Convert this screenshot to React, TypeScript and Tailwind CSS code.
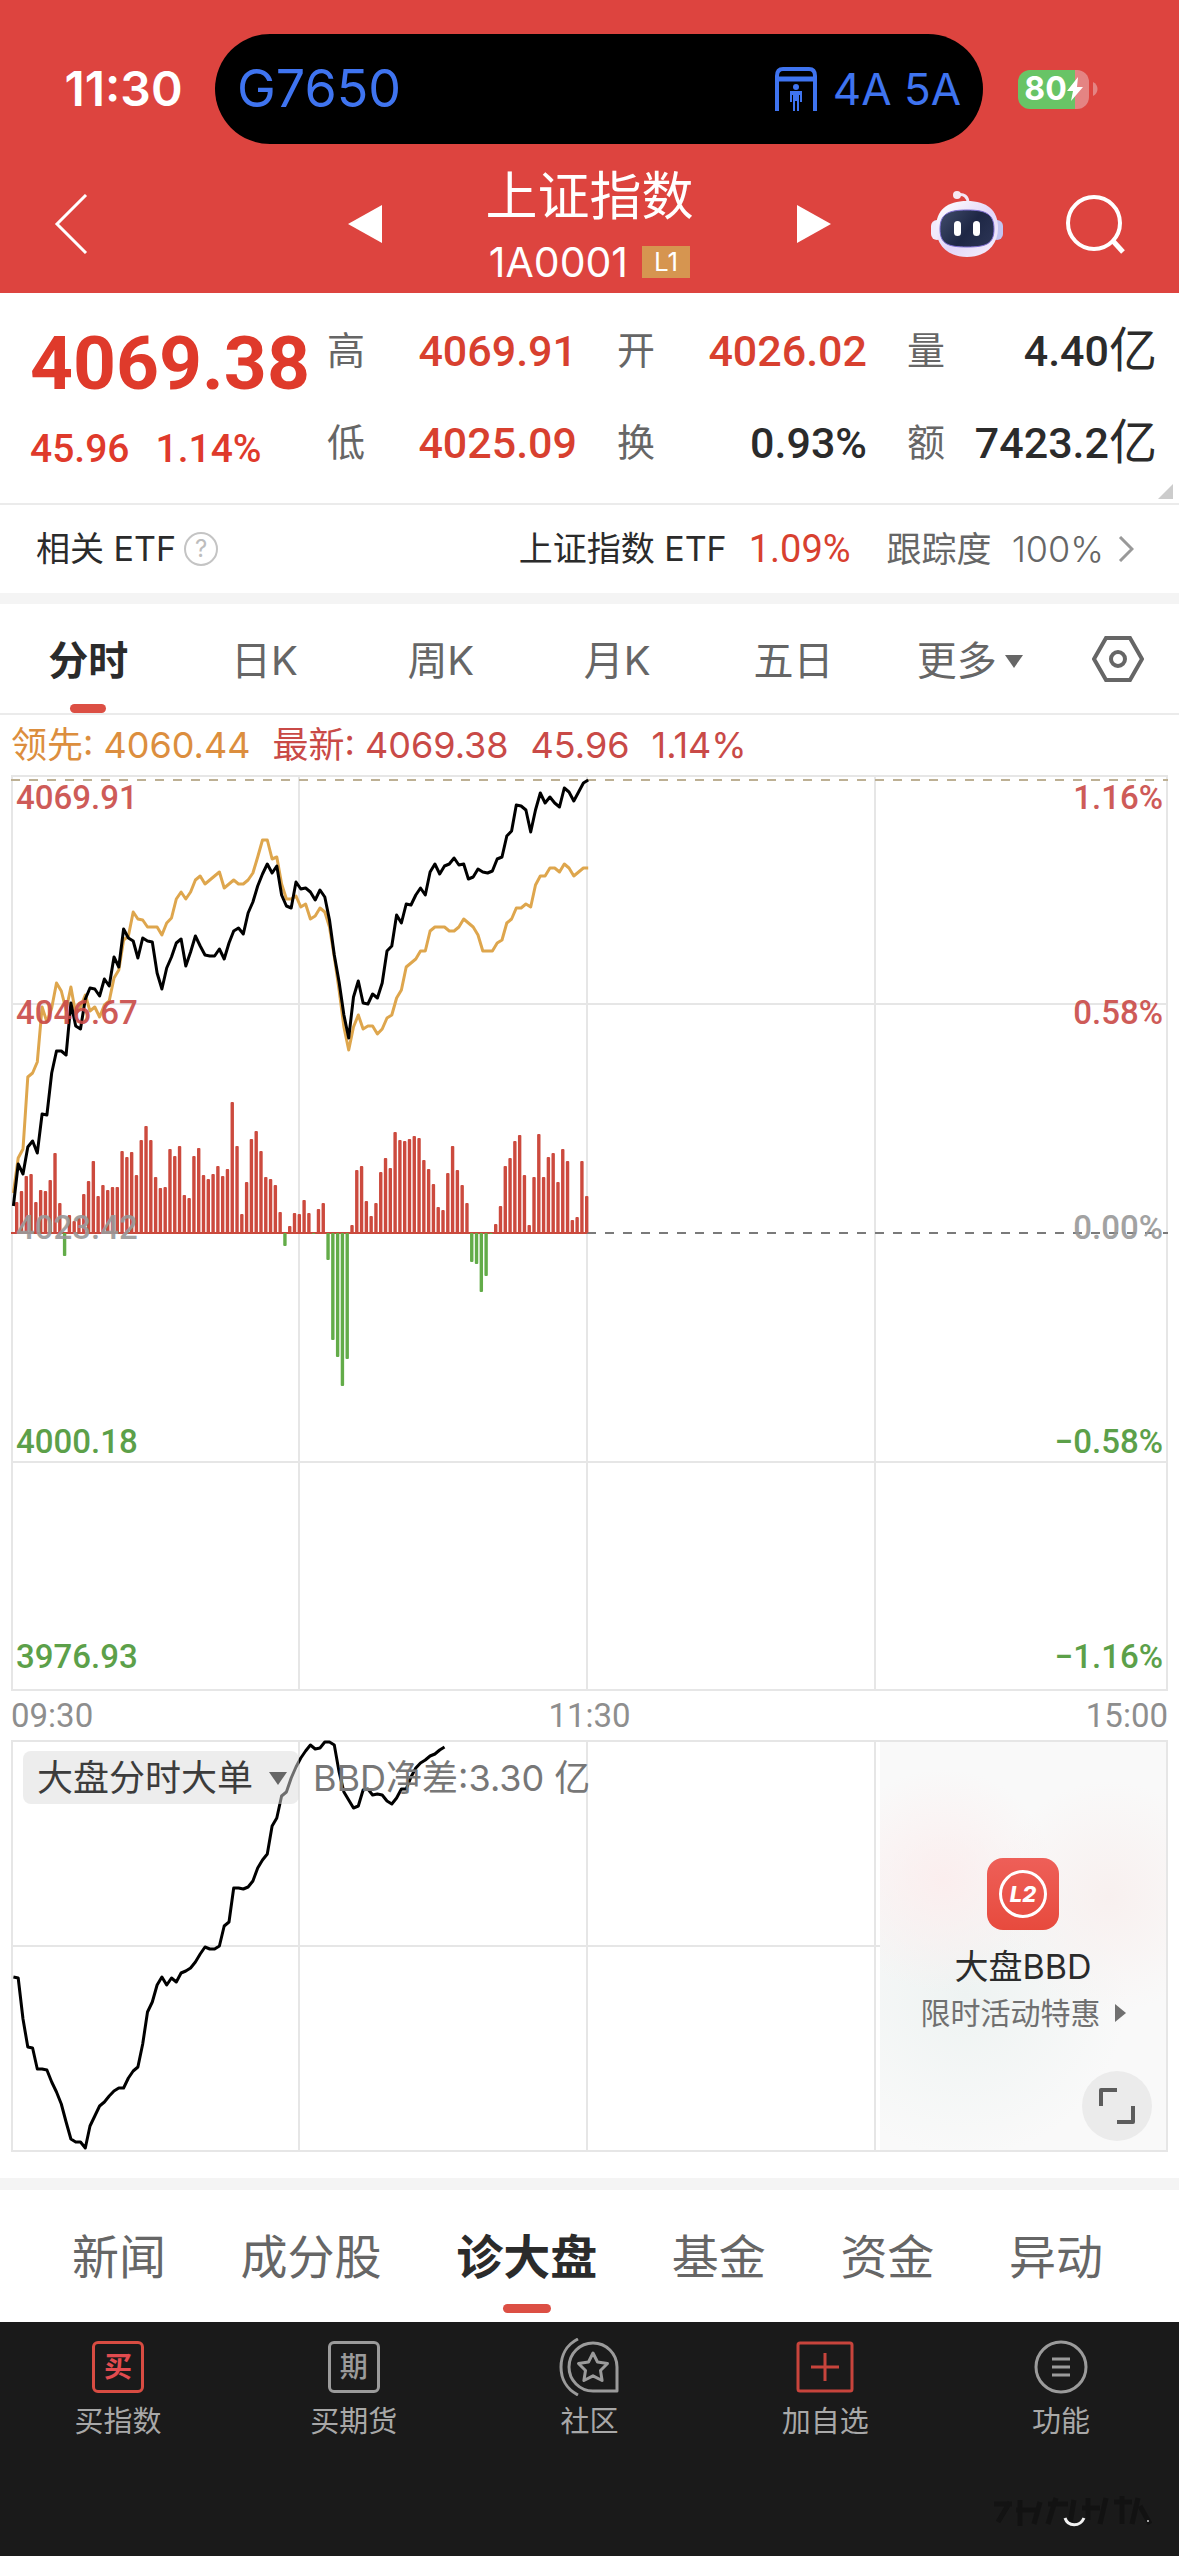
import { useState } from "react";
import { clsx } from "clsx";

const stats = [
  { label: "高", value: "4069.91", tone: "up" },
  { label: "开", value: "4026.02", tone: "up" },
  { label: "量", value: "4.40", unit: "亿" },
  { label: "低", value: "4025.09", tone: "up" },
  { label: "换", value: "0.93%" },
  { label: "额", value: "7423.2", unit: "亿" },
];

const periods = ["分时", "日K", "周K", "月K", "五日", "更多"];

const sections = ["新闻", "成分股", "诊大盘", "基金", "资金", "异动"];

const priceAxis = [
  { price: "4069.91", change: "1.16%", color: "text-[#c94a47]" },
  { price: "4046.67", change: "0.58%", color: "text-[#c94a47]" },
  { price: "4023.42", change: "0.00%", color: "text-[#999999]" },
  { price: "4000.18", change: "−0.58%", color: "text-[#4b9636]" },
  { price: "3976.93", change: "−1.16%", color: "text-[#4b9636]" },
];

// One value per minute, measured down from the top edge of the plot.
const indexLine = [
  431, 389, 399, 372, 366, 378, 339, 340, 298, 276, 276, 280, 228, 251, 254, 224,
  213, 214, 221, 204, 211, 182, 192, 154, 163, 166, 183, 163, 166, 167, 198, 214,
  193, 182, 168, 164, 191, 177, 161, 171, 180, 181, 181, 174, 184, 168, 156, 153,
  159, 138, 127, 111, 99, 89, 98, 91, 120, 131, 133, 107, 114, 113, 117, 125, 115,
  122, 145, 180, 207, 240, 263, 222, 206, 228, 229, 219, 223, 208, 176, 171, 140,
  148, 129, 130, 120, 113, 120, 97, 89, 99, 91, 89, 83, 90, 89, 104, 102, 94, 97,
  98, 96, 84, 82, 61, 56, 30, 31, 35, 57, 35, 18, 28, 22, 28, 32, 13, 17, 26, 17,
  8, 5,
];

const leadLine = [
  418, 383, 374, 302, 298, 287, 232, 247, 233, 208, 216, 235, 212, 239, 232, 220,
  236, 232, 242, 230, 226, 203, 195, 165, 161, 137, 144, 145, 152, 152, 152, 160,
  148, 143, 124, 117, 124, 117, 105, 101, 109, 105, 101, 97, 113, 109, 105, 109,
  109, 105, 98, 82, 65, 65, 84, 82, 109, 124, 124, 121, 132, 129, 144, 141, 133,
  137, 152, 182, 215, 252, 275, 252, 240, 254, 251, 251, 259, 254, 243, 240, 223,
  215, 192, 188, 184, 176, 176, 156, 152, 152, 152, 156, 156, 152, 144, 148, 152,
  160, 176, 176, 176, 168, 165, 148, 144, 133, 133, 129, 132, 110, 101, 101, 93,
  93, 97, 89, 93, 101, 97, 93, 93,
];

const momentum = [
  31, 42, 57, 59, 31, 43, 42, 53, 80, 30, -23, 18, 12, 15, 39, 52, 72, 37, 48, 43,
  46, 46, 82, 76, 81, 58, 93, 107, 93, 56, 45, 46, 84, 77, 87, 38, 35, 77, 85, 58,
  54, 59, 67, 57, 64, 131, 87, 19, 51, 94, 102, 82, 56, 54, 48, 21, -13, 7, 20,
  19, 33, 20, -1, 24, 30, -27, -107, -124, -153, -126, 8, 63, 67, 32, 17, 30, 61,
  75, 65, 101, 93, 92, 94, 97, 95, 73, 64, 49, 26, 23, 60, 87, 63, 48, 30, -29,
  -31, -59, -43, -1, 9, 27, 67, 75, 92, 98, 58, 8, 56, 99, 56, 76, 80, 51, 84, 72,
  13, 16, 72, 37,
];

const orderLine = [
  237, 238, 279, 307, 308, 329, 329, 330, 342, 352, 364, 382, 399, 402, 402, 408,
  386, 376, 366, 362, 356, 351, 348, 348, 338, 331, 327, 304, 272, 262, 245, 237,
  245, 238, 242, 233, 231, 228, 222, 214, 207, 209, 209, 206, 186, 182, 148, 148,
  149, 147, 141, 128, 120, 114, 86, 78, 56, 52, 38, 27, 18, 11, 5, 9, 8, 2, 2, 5,
  32, 52, 60, 68, 66, 50, 49, 55, 54, 55, 61, 64, 58, 49, 49, 37, 28, 23, 20, 16,
  14, 10, 7,
];

const STEP = 4.79;

function toPoints(values: number[]) {
  return values.map((y, i) => `${(2.4 + i * STEP).toFixed(1)},${y}`).join(" ");
}

function StatusBar() {
  return (
    <div className="flex items-center pt-[34px]">
      <span className="w-[215px] pl-8 text-center text-[48px] leading-none font-semibold">
        11:30
      </span>
      <div className="flex h-[110px] flex-1 items-center justify-between rounded-full bg-black pr-[22px] pl-[22px] text-[#3f74f0]">
        <span className="text-[52px] leading-none">G7650</span>
        <span className="flex items-center gap-4 text-[44px] leading-none">
          <svg width="42" height="45" viewBox="0 0 42 45" fill="none" aria-hidden>
            <path d="M2 44V9c0-5 2-7 6-7h26c4 0 6 2 6 7v35" stroke="currentColor" strokeWidth="4" />
            <path d="M2 12h38" stroke="currentColor" strokeWidth="5" />
            <circle cx="21" cy="20" r="3" fill="currentColor" />
            <path d="M15 24h12v11h-2v-7h-1v16h-2V34h-2v10h-2V28h-1v7h-2z" fill="currentColor" />
          </svg>
          4A 5A
        </span>
      </div>
      <div className="flex w-[196px] items-center gap-1 pl-[35px]">
        <div className="flex h-[39px] w-[71px] items-center justify-center rounded-xl bg-linear-to-r from-[#68c466] from-80% to-[#e48483] to-80%">
          <span className="text-[32px] leading-none font-bold">80</span>
          <svg width="16" height="24" viewBox="0 0 16 24" fill="currentColor" aria-hidden>
            <path d="M11 0L0 14h6L4 24l12-14h-6z" />
          </svg>
        </div>
        <svg width="5" height="14" viewBox="0 0 5 14" fill="#e48483" aria-hidden>
          <path d="M0 0c6 3 6 11 0 14z" />
        </svg>
      </div>
    </div>
  );
}

function RobotIcon() {
  return (
    <svg width="72" height="68" viewBox="0 0 72 68" fill="none" aria-hidden>
      <defs>
        <linearGradient id="shell" x1="10" y1="10" x2="60" y2="68" gradientUnits="userSpaceOnUse">
          <stop stopColor="#ffffff" />
          <stop offset="0.55" stopColor="#e2d6f8" />
          <stop offset="1" stopColor="#f5effc" />
        </linearGradient>
        <linearGradient id="visor" x1="14" y1="22" x2="60" y2="58" gradientUnits="userSpaceOnUse">
          <stop stopColor="#3c4766" />
          <stop offset="0.5" stopColor="#1e2745" />
          <stop offset="1" stopColor="#2c3556" />
        </linearGradient>
      </defs>
      <path d="M26 5c7-2 11 2 11 8" stroke="#f3e6f5" strokeWidth="3" />
      <circle cx="26" cy="5" r="4" fill="#f7e9f3" />
      <rect x="0" y="30" width="12" height="20" rx="6" fill="#f1ebfb" />
      <rect x="60" y="30" width="12" height="20" rx="6" fill="#c3c4f0" />
      <path d="M36 11c20 0 31 9 31 27S54 67 36 67 5 56 5 38 16 11 36 11z" fill="url(#shell)" />
      <path
        d="M36 20c19 0 27 4 27 19S55 57 36 57 9 54 9 39s8-19 27-19z"
        fill="url(#visor)"
        stroke="#7b6cd0"
        strokeWidth="1"
      />
      <rect x="23" y="31" width="7" height="15" rx="3.5" fill="#fff" />
      <rect x="42" y="31" width="7" height="15" rx="3.5" fill="#fff" />
    </svg>
  );
}

function NavBar() {
  return (
    <div className="grid grid-cols-[1fr_auto_1fr] items-center pt-[22px] pr-[54px] pb-[11px] pl-[54px]">
      <button type="button" aria-label="返回" className="justify-self-start">
        <svg width="34" height="60" viewBox="0 0 34 60" fill="none" stroke="currentColor" strokeWidth="3" aria-hidden>
          <path d="M32 1L3 30l29 29" />
        </svg>
      </button>
      <div className="flex items-center gap-[103px]">
        <button type="button" aria-label="上一个">
          <svg width="34" height="38" viewBox="0 0 34 38" fill="currentColor" aria-hidden>
            <path d="M34 0v38L0 19z" />
          </svg>
        </button>
        <div className="flex flex-col items-center gap-[14px]">
          <h1 className="text-[52px] leading-[62px]">上证指数</h1>
          <p className="flex items-center gap-[14px] text-[41px] leading-10">
            1A0001
            <span className="bg-[#d69550] px-3 text-[26px] leading-8">L1</span>
          </p>
        </div>
        <button type="button" aria-label="下一个">
          <svg width="34" height="38" viewBox="0 0 34 38" fill="currentColor" aria-hidden>
            <path d="M0 0v38l34-19z" />
          </svg>
        </button>
      </div>
      <div className="flex items-center gap-[62px] justify-self-end">
        <button type="button" aria-label="智能助手">
          <RobotIcon />
        </button>
        <button type="button" aria-label="搜索">
          <svg width="60" height="60" viewBox="0 0 60 60" fill="none" stroke="currentColor" strokeWidth="4" aria-hidden>
            <circle cx="29" cy="29" r="26" />
            <path d="M48 47l10 11" strokeWidth="5" />
          </svg>
        </button>
      </div>
    </div>
  );
}

function QuotePanel() {
  return (
    <section className="relative flex border-b-2 border-[#ebebeb] pt-7 pr-[22px] pb-6 pl-[30px] font-[Roboto,'Noto_Sans_CJK_SC',sans-serif] text-[#2b2b2b]">
      <div className="flex w-[297px] flex-col gap-[18px] pt-1 text-[#df3a2b]">
        <p className="text-[75px] leading-[76px] font-bold">4069.38</p>
        <p className="flex gap-[26px] text-[39px] leading-[60px] font-medium">
          <span>45.96</span>
          <span>1.14%</span>
        </p>
      </div>
      <dl className="grid flex-1 grid-cols-3 content-start gap-x-10 gap-y-8">
        {stats.map((item) => (
          <div key={item.label} className="flex h-[60px] items-center justify-between">
            <dt className="text-[38px] leading-none text-[#666666]">{item.label}</dt>
            <dd
              className={clsx(
                "flex items-center text-[43px] leading-none font-medium",
                item.tone === "up" && "text-[#d8402f]",
              )}
            >
              {item.value}
              {item.unit && <span className="text-[48px] font-normal">{item.unit}</span>}
            </dd>
          </div>
        ))}
      </dl>
      <svg className="absolute right-[6px] bottom-1" width="15" height="15" viewBox="0 0 15 15" aria-hidden>
        <path d="M15 0v15H0z" fill="#cccccc" />
      </svg>
    </section>
  );
}

function EtfRow() {
  return (
    <section className="flex h-[88px] items-center justify-between pr-[45px] pl-9 text-[34px] leading-none text-[#2b2b2b]">
      <div className="flex items-center gap-2">
        <span>相关 ETF</span>
        <button
          type="button"
          aria-label="说明"
          className="flex size-[34px] items-center justify-center rounded-full border-2 border-[#c4c4c4] text-2xl leading-none text-[#bdbdbd]"
        >
          ?
        </button>
      </div>
      <a href="#etf" className="flex items-center">
        <span>上证指数 ETF</span>
        <span className="ml-[22px] font-[Roboto] text-[38px] text-[#d8402f]">1.09%</span>
        <span className="ml-9 text-[35px] text-[#666666]">跟踪度</span>
        <span className="ml-5 text-[36px] font-light text-[#666666]">100%</span>
        <svg className="ml-[14px]" width="16" height="26" viewBox="0 0 16 26" fill="none" stroke="#999999" strokeWidth="3" aria-hidden>
          <path d="M2 1l12 12L2 25" />
        </svg>
      </a>
    </section>
  );
}

function PeriodTabs() {
  const [active, setActive] = useState("分时");

  return (
    <nav className="flex h-[111px] border-b-2 border-[#ebebeb] text-[40px] leading-none text-[#666666]">
      {periods.map((period) => {
        const selected = period === active;

        return (
          <button
            key={period}
            type="button"
            aria-pressed={selected}
            onClick={() => setActive(period)}
            className={clsx(
              "flex flex-1 flex-col items-center justify-end gap-[23px]",
              selected && "font-bold text-[#2b2b2b]",
            )}
          >
            <span className="flex items-center gap-2">
              {period}
              {period === "更多" && (
                <svg width="18" height="13" viewBox="0 0 18 13" fill="currentColor" aria-hidden>
                  <path d="M0 0h18L9 13z" />
                </svg>
              )}
            </span>
            <span className={clsx("h-[9px] w-9 rounded-full", selected && "bg-[#dc4f44]")} />
          </button>
        );
      })}
      <button type="button" aria-label="图表设置" className="flex w-[121px] items-center justify-center">
        <svg width="52" height="46" viewBox="0 0 52 46" fill="none" stroke="currentColor" strokeWidth="4" aria-hidden>
          <path d="M14 2h24l12 21-12 21H14L2 23z" />
          <circle cx="26" cy="23" r="7" />
        </svg>
      </button>
    </nav>
  );
}

function Gridlines({ height, rows }: { height: number; rows: number[] }) {
  return (
    <g stroke="#e6e6e6" strokeWidth="2" fill="none">
      <rect x="1" y="1" width="1155" height={height - 2} />
      {[288, 576, 864].map((x) => (
        <path key={x} d={`M${x} 0V${height}`} />
      ))}
      {rows.map((y) => (
        <path key={y} d={`M0 ${y}H1157`} />
      ))}
    </g>
  );
}

function IndexChart() {
  return (
    <section className="px-[11px]">
      <p className="flex h-[60px] items-center text-[36px] leading-none text-[#c94a47]">
        <span className="text-[#dc8e3e]">领先: 4060.44</span>
        <span className="ml-[22px]">最新: 4069.38</span>
        <span className="ml-[22px]">45.96</span>
        <span className="ml-[22px]">1.14%</span>
      </p>
      <div className="relative">
        <svg viewBox="0 0 1157 916" className="block w-full" fill="none" role="img" aria-label="分时走势">
          <Gridlines height={916} rows={[229, 687]} />
          <path d="M0 5H1157" stroke="#bdb094" strokeWidth="2" strokeDasharray="9 9" />
          <path d="M576 458H1157" stroke="#7a7a7a" strokeWidth="2" strokeDasharray="9 9" />
          <path d="M0 458H576" stroke="#c94a3d" strokeWidth="2" />
          {momentum.map((value, i) => (
            <rect
              key={i}
              x={4 + i * STEP}
              y={value > 0 ? 458 - value : 458}
              width="3.4"
              height={Math.abs(value)}
              rx="1"
              fill={value > 0 ? "#cc4a3e" : "#63ac49"}
            />
          ))}
          <polyline points={toPoints(leadLine)} stroke="#dea64d" strokeWidth="3" strokeLinejoin="round" />
          <polyline points={toPoints(indexLine)} stroke="#000000" strokeWidth="3" strokeLinejoin="round" />
        </svg>
        <div className="absolute inset-0 flex flex-col justify-between px-[5px] pt-[3px] pb-[14px] font-[Roboto] text-[33px] leading-10 font-medium">
          {priceAxis.map((row) => (
            <div key={row.price} className={clsx("flex justify-between opacity-90", row.color)}>
              <span>{row.price}</span>
              <span>{row.change}</span>
            </div>
          ))}
        </div>
      </div>
      <div className="flex h-[49px] items-center justify-between font-[Roboto] text-[33px] leading-none text-[#8e8e8e]">
        <span>09:30</span>
        <span>11:30</span>
        <span>15:00</span>
      </div>
    </section>
  );
}

function PromoCard() {
  return (
    <a
      href="#bbd"
      className="absolute top-[2px] right-[2px] bottom-[2px] flex w-[286px] flex-col items-center bg-[#f9f9f9] bg-[radial-gradient(circle_at_22%_34%,#fbeeee,transparent_32%),radial-gradient(circle_at_80%_38%,#f8f0ef,transparent_34%),radial-gradient(circle_at_30%_62%,#eef3f2,transparent_50%)] pt-[116px] leading-none"
    >
      <span className="flex size-[72px] items-center justify-center rounded-2xl bg-linear-to-b from-[#ee5f58] to-[#e74a3d]">
        <span className="flex size-12 items-center justify-center rounded-full border-3 border-white text-[22px] font-extrabold text-white italic">
          L2
        </span>
      </span>
      <span className="mt-[20px] text-[34px] text-[#2b2b2b]">大盘BBD</span>
      <span className="mt-[14px] flex items-center gap-[14px] text-[30px] text-[#707070]">
        限时活动特惠
        <svg width="11" height="18" viewBox="0 0 11 18" fill="currentColor" aria-hidden>
          <path d="M0 0l11 9-11 9z" />
        </svg>
      </span>
    </a>
  );
}

function OrderChart() {
  return (
    <section className="relative mx-[11px] mb-[26px]">
      <svg viewBox="0 0 1157 412" className="block w-full" fill="none" role="img" aria-label="大盘分时大单">
        <Gridlines height={412} rows={[206]} />
        <polyline points={toPoints(orderLine)} stroke="#000000" strokeWidth="3" strokeLinejoin="round" />
      </svg>
      <div className="absolute top-[11px] left-3 flex items-center gap-[14px] text-[36px] leading-none">
        <div className="relative rounded-lg bg-[#dcdcdc]/50 text-[#3c3c3c]">
          <select aria-label="副图指标" className="h-[53px] w-[276px] appearance-none bg-transparent pl-[14px]">
            <option>大盘分时大单</option>
            <option>成交量</option>
          </select>
          <svg
            className="pointer-events-none absolute top-[21px] right-3"
            width="18"
            height="13"
            viewBox="0 0 18 13"
            fill="#666666"
            aria-hidden
          >
            <path d="M0 0h18L9 13z" />
          </svg>
        </div>
        <span className="text-[#777777]">BBD净差:3.30 亿</span>
      </div>
      <PromoCard />
      <button
        type="button"
        aria-label="全屏"
        className="absolute right-4 bottom-[11px] flex size-[70px] items-center justify-center rounded-full bg-[#ebebeb]"
      >
        <svg width="36" height="36" viewBox="0 0 36 36" fill="none" stroke="#5c5c5c" strokeWidth="4" aria-hidden>
          <path d="M2 18V2h16M34 18v16H18" strokeLinejoin="round" />
        </svg>
      </button>
    </section>
  );
}

function SectionTabs() {
  const [active, setActive] = useState("诊大盘");

  return (
    <nav className="flex h-[132px] justify-between pr-[76px] pl-[72px] text-[47px] leading-none text-[#666666]">
      {sections.map((section) => {
        const selected = section === active;

        return (
          <button
            key={section}
            type="button"
            aria-pressed={selected}
            onClick={() => setActive(section)}
            className={clsx(
              "flex flex-col items-center justify-end gap-6 pb-[9px]",
              selected && "font-bold text-[#2b2b2b]",
            )}
          >
            {section}
            <span className={clsx("h-[9px] w-12 rounded-full", selected && "bg-[#dc4f44]")} />
          </button>
        );
      })}
    </nav>
  );
}

function CommunityIcon() {
  return (
    <svg width="60" height="58" viewBox="0 0 60 58" fill="none" stroke="currentColor" strokeWidth="3" aria-hidden>
      <path d="M19 1C7 7 2 18 2 29s5 22 17 28" />
      <path d="M58 53V29A24 24 0 1 0 34 53z" strokeLinejoin="round" />
      <path d="M34 15l4.500 9 10 1.500-7 7 1.600 10-9.100-4.700-9.100 4.700 1.600-10-7-7 10-1.500z" strokeLinejoin="round" />
    </svg>
  );
}

function BottomBar() {
  const items = [
    {
      label: "买指数",
      icon: (
        <span className="flex size-[52px] items-center justify-center rounded-md border-3 border-[#d84c42] text-[28px] leading-none font-bold text-[#e24b4f]">
          买
        </span>
      ),
    },
    {
      label: "买期货",
      icon: (
        <span className="flex size-[52px] items-center justify-center rounded-md border-3 text-[28px] leading-none font-medium">
          期
        </span>
      ),
    },
    { label: "社区", icon: <CommunityIcon /> },
    {
      label: "加自选",
      icon: (
        <svg width="58" height="52" viewBox="0 0 58 52" fill="none" stroke="#c8443c" strokeWidth="3" aria-hidden>
          <rect x="2" y="2" width="54" height="48" rx="2" />
          <path d="M29 12v28M15 26h28" />
        </svg>
      ),
    },
    {
      label: "功能",
      icon: (
        <svg width="54" height="54" viewBox="0 0 54 54" fill="none" stroke="currentColor" strokeWidth="3" aria-hidden>
          <circle cx="27" cy="27" r="25" />
          <path d="M18 19h18M18 27h18M18 35h18" />
        </svg>
      ),
    },
  ];

  return (
    <footer className="relative grow bg-[#1a1a1a] pt-4 pb-[114px] text-[#9b9b9b]">
      <div className="grid grid-cols-5">
        {items.map((item) => (
          <button key={item.label} type="button" className="flex flex-col items-center gap-2">
            <span className="flex h-[58px] items-center">{item.icon}</span>
            <span className="text-[29px] leading-9 text-[#a8a8a8]">{item.label}</span>
          </button>
        ))}
      </div>
      <svg className="absolute right-6 bottom-6" width="165" height="40" viewBox="0 0 165 40" fill="none" aria-hidden>
        <g stroke="#0c0c0c" strokeWidth="5" opacity="0.5">
          <path d="M4 12h18M8 30l12-20M30 8v26M26 18h20M50 10l-6 22M58 12h20M66 6l-8 26M84 8l-4 24M98 6v22M92 16h18" />
          <path d="M116 6l-6 26M124 10h18M132 4v28M148 6l-6 26M150 14l10 18" />
        </g>
        <path d="M75 26c3 9 15 9 19 0" stroke="#f2f2f2" strokeWidth="3" />
        <circle cx="158" cy="29" r="1" fill="#d0d0d0" />
      </svg>
    </footer>
  );
}

export default function App() {
  return (
    <div className="flex min-h-screen flex-col bg-white font-[Inter,'Noto_Sans_CJK_SC',sans-serif]">
      <header className="bg-[#dd443f] text-white">
        <StatusBar />
        <NavBar />
      </header>
      <main>
        <QuotePanel />
        <EtfRow />
        <div className="h-[11px] bg-[#f4f4f4]" />
        <PeriodTabs />
        <IndexChart />
        <OrderChart />
        <div className="h-3 bg-[#f4f4f4]" />
        <SectionTabs />
      </main>
      <BottomBar />
    </div>
  );
}
